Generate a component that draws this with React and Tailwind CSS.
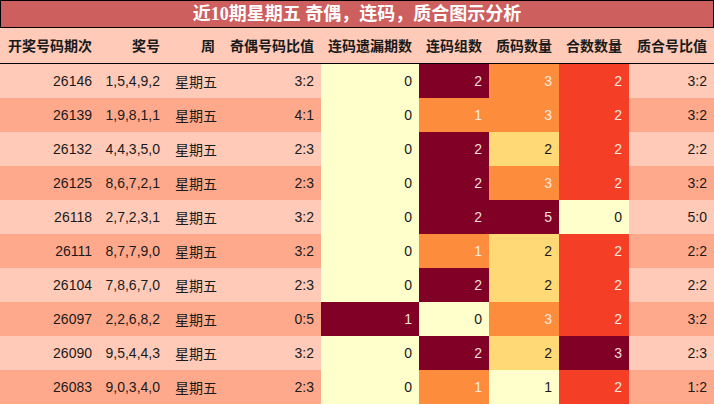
const cols = 'grid grid-cols-[100px_67px_55px_99px_98px_70px_70px_70px_85px]';

const heat = {
  y: 'bg-[#ffffcc] text-[#1a1a1a]',
  l: 'bg-[#fed976] text-[#1a1a1a]',
  o: 'bg-[#fd8d3c] text-[#fbe9e0]',
  r: 'bg-[#f43f26] text-[#fbe9e0]',
  d: 'bg-[#800026] text-[#f2dede]',
};

const rows = [
  ['26146', '1,5,4,9,2', '3:2', [0, 'y'], [2, 'd'], [3, 'o'], [2, 'r'], '3:2'],
  ['26139', '1,9,8,1,1', '4:1', [0, 'y'], [1, 'o'], [3, 'o'], [2, 'r'], '3:2'],
  ['26132', '4,4,3,5,0', '2:3', [0, 'y'], [2, 'd'], [2, 'l'], [2, 'r'], '2:2'],
  ['26125', '8,6,7,2,1', '2:3', [0, 'y'], [2, 'd'], [3, 'o'], [2, 'r'], '3:2'],
  ['26118', '2,7,2,3,1', '3:2', [0, 'y'], [2, 'd'], [5, 'd'], [0, 'y'], '5:0'],
  ['26111', '8,7,7,9,0', '3:2', [0, 'y'], [1, 'o'], [2, 'l'], [2, 'r'], '2:2'],
  ['26104', '7,8,6,7,0', '2:3', [0, 'y'], [2, 'd'], [2, 'l'], [2, 'r'], '2:2'],
  ['26097', '2,2,6,8,2', '0:5', [1, 'd'], [0, 'y'], [3, 'o'], [2, 'r'], '3:2'],
  ['26090', '9,5,4,4,3', '3:2', [0, 'y'], [2, 'd'], [2, 'l'], [3, 'd'], '2:3'],
  ['26083', '9,0,3,4,0', '2:3', [0, 'y'], [1, 'o'], [1, 'y'], [2, 'r'], '1:2'],
];

const headers = ['开奖号码期次', '奖号', '周', '奇偶号码比值', '连码遗漏期数', '连码组数', '质码数量', '合数数量', '质合号比值'];

export default function App() {
  return (
    <div className="w-[714px] bg-white font-['Liberation_Sans','Noto_Sans_CJK_SC',sans-serif] text-[14px] text-[#1a1a1a]">
      <div className="h-[28px] bg-[#cd5f5f] border border-black flex items-center justify-center">
        <span className="text-white font-bold text-[18px] leading-none font-['Liberation_Serif','Noto_Sans_CJK_SC',serif]">
          近10期星期五 奇偶，连码，质合图示分析
        </span>
      </div>
      <div className={`${cols} h-[36px] bg-[#ffcab8] border-b border-black font-bold font-['Noto_Sans_CJK_SC',sans-serif]`}>
        {headers.map((h, i) => (
          <div key={i} className={`flex items-center ${i === 0 ? 'pl-2' : 'justify-end pr-[7px]'}`}>{h}</div>
        ))}
      </div>
      {rows.map((r, i) => {
        const base = i % 2 === 0 ? 'bg-[#ffcab8]' : 'bg-[#ffa98c]';
        return (
          <div key={r[0]} className={`${cols} h-[34px]`}>
            <div className={`${base} flex items-center justify-end pr-[8px]`}>{r[0]}</div>
            <div className={`${base} flex items-center justify-end pr-[7px]`}>{r[1]}</div>
            <div className={`${base} flex items-center pl-[8px] font-['Noto_Sans_CJK_SC',sans-serif]`}>星期五</div>
            <div className={`${base} flex items-center justify-end pr-[7px]`}>{r[2]}</div>
            {[r[3], r[4], r[5], r[6]].map(([v, c], j) => (
              <div key={j} className={`${heat[c]} flex items-center justify-end pr-[7px]`}>{v}</div>
            ))}
            <div className={`${base} flex items-center justify-end pr-[7px]`}>{r[7]}</div>
          </div>
        );
      })}
    </div>
  );
}
